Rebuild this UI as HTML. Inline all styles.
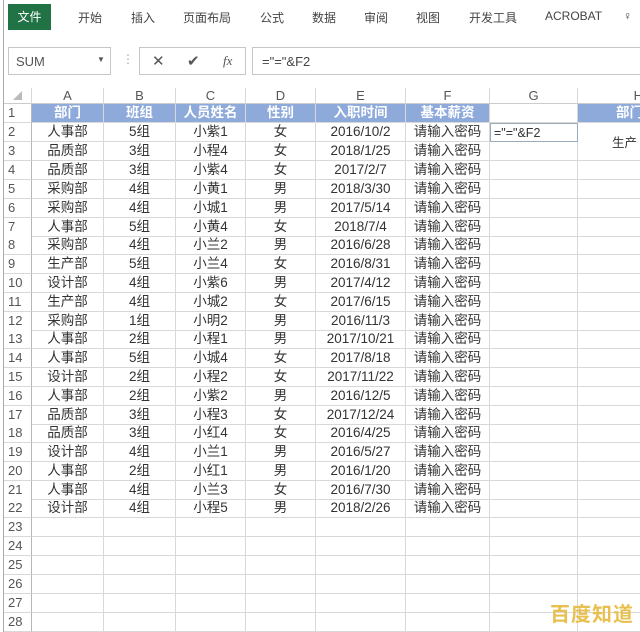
<!DOCTYPE html>
<html><head><meta charset="utf-8"><style>
*{margin:0;padding:0;box-sizing:border-box}
body{width:640px;height:632px;overflow:hidden;background:#fff;font-family:"Liberation Sans","Noto Sans CJK SC",sans-serif;position:relative;color:#333}
.tabs{position:absolute;top:0;left:0;width:640px;height:34px;background:#fff}
.tab{position:absolute;top:9px;font-size:12px;color:#444}
.file{position:absolute;left:8px;top:4px;width:43px;height:26px;background:#217346;color:#fff;font-size:12px;text-align:center;line-height:26px}
.fbar{position:absolute;top:34px;left:0;width:640px;height:50px;background:#fff}
.box{position:absolute;border:1px solid #c6c6c6;background:#fff}
.lb{position:absolute;left:3px;top:0;width:1px;height:632px;background:#aaa}
.row{position:absolute;left:4px;height:19px;display:flex;width:640px}
.row div{flex:none;height:100%;border-right:1px solid #d8d8d8;border-bottom:1px solid #d8d8d8;text-align:center;font-size:13.5px;line-height:18px;white-space:nowrap;overflow:hidden}
.row div:nth-child(1){width:28px;background:#fff;color:#555;font-size:13px;text-align:left;padding-left:4px;border-right:1px solid #b8b8b8}
.row div:nth-child(2){width:72px}.row div:nth-child(3){width:72px}.row div:nth-child(4){width:70px}.row div:nth-child(5){width:70px}.row div:nth-child(6){width:90px}.row div:nth-child(7){width:84px}.row div:nth-child(8){width:88px}.row div:nth-child(9){width:70px}
.h div{color:#fff;background:#8eaadb;font-weight:bold}
.h div:nth-child(1),.h div:nth-child(8){background:#fff}
.ch{position:absolute;left:4px;top:88px;height:16px;display:flex}
.ch div{flex:none;height:16px;border-right:1px solid #d8d8d8;border-bottom:1px solid #ccc;text-align:center;font-size:13px;line-height:16px;color:#555}
</style></head><body>
<div class="tabs">
<div class="file">文件</div>
<div class="tab" style="left:78px">开始</div>
<div class="tab" style="left:131px">插入</div>
<div class="tab" style="left:183px">页面布局</div>
<div class="tab" style="left:260px">公式</div>
<div class="tab" style="left:312px">数据</div>
<div class="tab" style="left:364px">审阅</div>
<div class="tab" style="left:416px">视图</div>
<div class="tab" style="left:469px">开发工具</div>
<div class="tab" style="left:545px">ACROBAT</div>
<div class="tab" style="left:623px">♀</div>
</div>
<div class="fbar">
<div class="box" style="left:8px;top:13px;width:103px;height:28px;font-size:13px;color:#555;padding:6px 0 0 7px">SUM<span style="position:absolute;left:88px;top:7px;font-size:8px">▼</span></div>
<div style="position:absolute;left:122px;top:18px;color:#aaa;font-size:12px">⋮</div>
<div class="box" style="left:139px;top:13px;width:107px;height:28px;color:#555;font-size:15px">
<span style="position:absolute;left:12px;top:4px">✕</span><span style="position:absolute;left:47px;top:4px">✔</span><span style="position:absolute;left:83px;top:5px;font-family:'Liberation Serif';font-style:italic;font-size:13px">fx</span></div>
<div class="box" style="left:252px;top:13px;width:400px;height:28px;font-size:13px;color:#444;padding:6px 0 0 9px">="="&amp;F2</div>
</div>
<div class="lb"></div>
<div class="ch">
<div style="width:28px;color:#bbb;font-size:9px">◢</div><div style="width:72px">A</div><div style="width:72px">B</div><div style="width:70px">C</div><div style="width:70px">D</div><div style="width:90px">E</div><div style="width:84px">F</div><div style="width:88px">G</div><div style="width:70px;text-align:right;padding-right:4px">H</div>
</div>
<div class="row h" style="top:104px"><div style="color:#555;font-weight:normal">1</div><div>部门</div><div>班组</div><div>人员姓名</div><div>性别</div><div>入职时间</div><div>基本薪资</div><div></div><div style="text-align:right;padding-right:4px">部门</div></div>
<div class="row" style="top:123px"><div>2</div><div>人事部</div><div>5组</div><div>小紫1</div><div>女</div><div>2016/10/2</div><div>请输入密码</div><div style="text-align:left;padding-left:3px;font-size:12.5px;border:1px solid #9ab">="="&amp;F2</div><div style="border-bottom:none"></div></div>
<div class="row" style="top:142px"><div>3</div><div>品质部</div><div>3组</div><div>小程4</div><div>女</div><div>2018/1/25</div><div>请输入密码</div><div></div><div></div></div>
<div class="row" style="top:161px"><div>4</div><div>品质部</div><div>3组</div><div>小紫4</div><div>女</div><div>2017/2/7</div><div>请输入密码</div><div></div><div></div></div>
<div class="row" style="top:180px"><div>5</div><div>采购部</div><div>4组</div><div>小黄1</div><div>男</div><div>2018/3/30</div><div>请输入密码</div><div></div><div></div></div>
<div class="row" style="top:199px"><div>6</div><div>采购部</div><div>4组</div><div>小城1</div><div>男</div><div>2017/5/14</div><div>请输入密码</div><div></div><div></div></div>
<div class="row" style="top:218px"><div>7</div><div>人事部</div><div>5组</div><div>小黄4</div><div>女</div><div>2018/7/4</div><div>请输入密码</div><div></div><div></div></div>
<div class="row" style="top:236px"><div>8</div><div>采购部</div><div>4组</div><div>小兰2</div><div>男</div><div>2016/6/28</div><div>请输入密码</div><div></div><div></div></div>
<div class="row" style="top:255px"><div>9</div><div>生产部</div><div>5组</div><div>小兰4</div><div>女</div><div>2016/8/31</div><div>请输入密码</div><div></div><div></div></div>
<div class="row" style="top:274px"><div>10</div><div>设计部</div><div>4组</div><div>小紫6</div><div>男</div><div>2017/4/12</div><div>请输入密码</div><div></div><div></div></div>
<div class="row" style="top:293px"><div>11</div><div>生产部</div><div>4组</div><div>小城2</div><div>女</div><div>2017/6/15</div><div>请输入密码</div><div></div><div></div></div>
<div class="row" style="top:312px"><div>12</div><div>采购部</div><div>1组</div><div>小明2</div><div>男</div><div>2016/11/3</div><div>请输入密码</div><div></div><div></div></div>
<div class="row" style="top:330px"><div>13</div><div>人事部</div><div>2组</div><div>小程1</div><div>男</div><div>2017/10/21</div><div>请输入密码</div><div></div><div></div></div>
<div class="row" style="top:349px"><div>14</div><div>人事部</div><div>5组</div><div>小城4</div><div>女</div><div>2017/8/18</div><div>请输入密码</div><div></div><div></div></div>
<div class="row" style="top:368px"><div>15</div><div>设计部</div><div>2组</div><div>小程2</div><div>女</div><div>2017/11/22</div><div>请输入密码</div><div></div><div></div></div>
<div class="row" style="top:387px"><div>16</div><div>人事部</div><div>2组</div><div>小紫2</div><div>男</div><div>2016/12/5</div><div>请输入密码</div><div></div><div></div></div>
<div class="row" style="top:406px"><div>17</div><div>品质部</div><div>3组</div><div>小程3</div><div>女</div><div>2017/12/24</div><div>请输入密码</div><div></div><div></div></div>
<div class="row" style="top:424px"><div>18</div><div>品质部</div><div>3组</div><div>小红4</div><div>女</div><div>2016/4/25</div><div>请输入密码</div><div></div><div></div></div>
<div class="row" style="top:443px"><div>19</div><div>设计部</div><div>4组</div><div>小兰1</div><div>男</div><div>2016/5/27</div><div>请输入密码</div><div></div><div></div></div>
<div class="row" style="top:462px"><div>20</div><div>人事部</div><div>2组</div><div>小红1</div><div>男</div><div>2016/1/20</div><div>请输入密码</div><div></div><div></div></div>
<div class="row" style="top:481px"><div>21</div><div>人事部</div><div>4组</div><div>小兰3</div><div>女</div><div>2016/7/30</div><div>请输入密码</div><div></div><div></div></div>
<div class="row" style="top:499px"><div>22</div><div>设计部</div><div>4组</div><div>小程5</div><div>男</div><div>2018/2/26</div><div>请输入密码</div><div></div><div></div></div>
<div class="row" style="top:518px"><div>23</div><div></div><div></div><div></div><div></div><div></div><div></div><div></div><div></div></div>
<div class="row" style="top:537px"><div>24</div><div></div><div></div><div></div><div></div><div></div><div></div><div></div><div></div></div>
<div class="row" style="top:556px"><div>25</div><div></div><div></div><div></div><div></div><div></div><div></div><div></div><div></div></div>
<div class="row" style="top:575px"><div>26</div><div></div><div></div><div></div><div></div><div></div><div></div><div></div><div></div></div>
<div class="row" style="top:594px"><div>27</div><div></div><div></div><div></div><div></div><div></div><div></div><div></div><div></div></div>
<div class="row" style="top:613px"><div>28</div><div></div><div></div><div></div><div></div><div></div><div></div><div></div><div></div></div>
<div style="position:absolute;left:612px;top:132px;font-size:12.5px;color:#333;background:#fff;white-space:nowrap">生产</div>
<div style="position:absolute;left:550px;top:598px;font-size:20px;font-weight:bold;color:#e8c050;letter-spacing:1px">百度知道</div>
</body></html>
